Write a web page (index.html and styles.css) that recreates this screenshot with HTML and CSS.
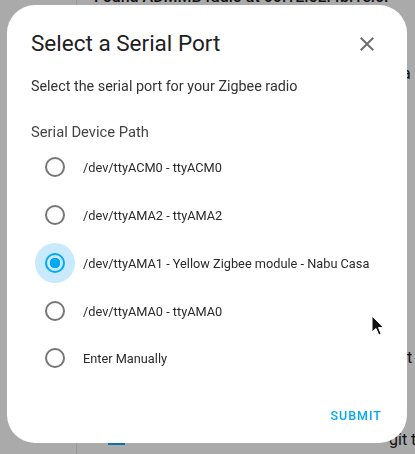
FILE: index.html
```html
<!DOCTYPE html>
<html lang="en">
<head>
<meta charset="utf-8">
<title>Select a Serial Port</title>
<link rel="stylesheet" href="styles.css">
</head>
<body>
<div class="page">
  <aside class="sidebar"></aside>
  <main class="content">
    <p class="bg-title">Found ADMMB radio at 00:1E:5E:4b:1e:6F</p>
    <p class="bg-a">a</p>
    <p class="bg-it">it</p>
    <p class="bg-git">git t</p>
    <span class="bg-check"></span>
  </main>
</div>

<div class="scrim">
  <div class="dialog" role="dialog">
    <header class="dialog-header">
      <h2 class="dialog-title">Select a Serial Port</h2>
      <button class="close" aria-label="Close">
        <svg width="24" height="24" viewBox="0 0 24 24"><path d="M19,6.41L17.59,5L12,10.59L6.41,5L5,6.41L10.59,12L5,17.59L6.41,19L12,13.41L17.59,19L19,17.59L13.41,12L19,6.41Z" fill="currentColor"/></svg>
      </button>
    </header>
    <p class="description">Select the serial port for your Zigbee radio</p>
    <div class="field">
      <div class="field-label">Serial Device Path</div>
      <div class="options">
        <label class="option"><span class="radio"></span><span class="opt-text">/dev/ttyACM0 - ttyACM0</span></label>
        <label class="option"><span class="radio"></span><span class="opt-text">/dev/ttyAMA2 - ttyAMA2</span></label>
        <label class="option checked"><span class="radio"></span><span class="opt-text">/dev/ttyAMA1 - Yellow Zigbee module - Nabu Casa</span></label>
        <label class="option"><span class="radio"></span><span class="opt-text">/dev/ttyAMA0 - ttyAMA0</span></label>
        <label class="option"><span class="radio"></span><span class="opt-text">Enter Manually</span></label>
      </div>
    </div>
    <footer class="actions">
      <button class="submit">Submit</button>
    </footer>
  </div>
</div>

<svg class="cursor" width="14" height="22" viewBox="0 0 14 22"><path d="M1 1 L1 17 L5 13.5 L7.8 20 L10.2 19 L7.5 12.6 L12.5 12.6 Z" fill="#111" stroke="#fff" stroke-width="1"/></svg>
</body>
</html>
```

FILE: styles.css
```css
* { box-sizing: border-box; }
html, body { margin: 0; padding: 0; }
body {
  width: 415px;
  height: 454px;
  overflow: hidden;
  font-family: Roboto, "Noto Sans", sans-serif;
  background: #aaaaaa;
}
.page {
  display: flex;
  height: 454px;
}
.sidebar {
  width: 77px;
  border-right: 1px solid #9a9a9a;
}
.content {
  flex: 1;
  position: relative;
  margin: 0;
}
.content p { margin: 0; color: #111; font-size: 16px; position: absolute; white-space: nowrap; }
.bg-title { left: 17px; top: -13px; font-weight: 500; }
.bg-a { left: 325px; top: 64px; }
.bg-it { left: 326px; top: 348px; }
.bg-git { left: 312px; top: 430px; }
.bg-check { position: absolute; left: 31px; top: 441px; width: 17px; height: 4px; background: #0b6fb0; }

.scrim {
  position: fixed;
  inset: 0;
}
.dialog {
  position: absolute;
  left: 7px;
  top: 5px;
  width: 400px;
  height: 438px;
  background: #fff;
  border-radius: 28px;
  padding: 0 24px;
  display: flex;
  flex-direction: column;
}
.dialog-header {
  display: flex;
  align-items: center;
  justify-content: space-between;
  padding-top: 23px;
  height: 53px;
}
.dialog-title {
  margin: 0;
  font-size: 22.5px;
  font-weight: 400;
  color: #212121;
  line-height: 28px;
}
.close {
  border: 0;
  background: none;
  padding: 0;
  color: #6f6f6f;
  width: 24px;
  height: 24px;
  margin-right: 4px;
  margin-top: 2px;
}
.close svg { display: block; }
.description {
  margin: 19px 0 0;
  font-size: 14.35px;
  line-height: 20px;
  color: #333;
}
.field { margin-top: 25px; }
.field-label {
  font-size: 14.75px;
  line-height: 20px;
  color: #444;
  margin-bottom: 1px;
}
.options { display: flex; flex-direction: column; }
.option {
  display: flex;
  align-items: center;
  height: 48px;
  font-size: 12.75px;
  color: #2a2a2a;
  white-space: nowrap;
}
.option:last-child { height: 46px; }
.radio {
  width: 40px;
  height: 40px;
  border-radius: 50%;
  display: flex;
  align-items: center;
  justify-content: center;
  margin-left: 4px;
  margin-right: 8px;
  flex: none;
}
.radio::before {
  content: "";
  width: 20px;
  height: 20px;
  border-radius: 50%;
  border: 2px solid #767676;
  box-sizing: border-box;
}
.option.checked .radio { background: #c8eafc; }
.option.checked .radio::before {
  border-color: #03a9f4;
  background: radial-gradient(circle, #03a9f4 0 5px, transparent 5.5px);
}
.actions {
  margin-top: auto;
  display: flex;
  justify-content: flex-end;
  padding-bottom: 20px;
}
.submit {
  border: 0;
  background: none;
  font-family: inherit;
  font-size: 12.5px;
  font-weight: 500;
  text-transform: uppercase;
  letter-spacing: 1px;
  color: #03a9f4;
  padding: 0;
  margin-right: 1px;
}
.cursor {
  position: fixed;
  left: 371px;
  top: 315px;
}
```
